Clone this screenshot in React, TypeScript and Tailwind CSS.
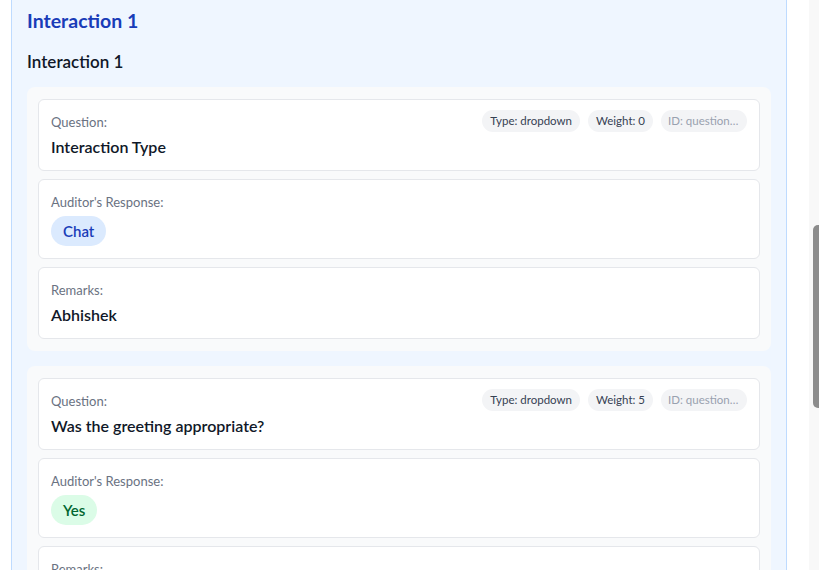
const questions = [
  {
    question: "Interaction Type",
    type: "dropdown",
    weight: 0,
    id: "question_interaction_type",
    response: "Chat",
    tone: "blue",
    remarks: "Abhishek",
  },
  {
    question: "Was the greeting appropriate?",
    type: "dropdown",
    weight: 5,
    id: "question_greeting",
    response: "Yes",
    tone: "green",
    remarks: "Greeted the customer by name",
  },
];

const Chip = ({ children, muted }: { children: React.ReactNode; muted?: boolean }) => (
  <span
    className={`block h-[22px] truncate rounded-full bg-gray-100 text-[11.5px] leading-[22px] ${
      muted ? "max-w-[86px] px-[7px] text-gray-400" : "px-2 text-gray-700"
    }`}
  >
    {children}
  </span>
);

const App = () => {
  return (
    <div className="flex h-[570px] overflow-hidden bg-white font-['Lato',sans-serif]">
      <div className="flex-1 pl-[11px] pr-[22px]">
        {/* Interaction panel */}
        <section className="border-x border-blue-200 bg-blue-50 px-[15px] pt-[7px]">
          <h2 className="text-[19.5px] font-bold leading-7 text-blue-800">Interaction 1</h2>
          <h3 className="mt-[15px] text-[17px] font-semibold leading-6 text-gray-900">Interaction 1</h3>

          <div className="mt-[13px] space-y-[15px]">
            {questions.map((q) => (
              <div key={q.id} className="space-y-2 rounded-lg bg-gray-50 px-[11px] py-3">
                {/* Question */}
                <div className="flex items-start justify-between rounded-md border border-gray-200 bg-white p-3">
                  <div>
                    <p className="text-[13px] leading-5 text-gray-500">Question:</p>
                    <p className="mt-1 text-[16px] font-semibold leading-[22px] text-gray-900">{q.question}</p>
                  </div>
                  <div className="-mt-[2px] flex gap-2">
                    <Chip>Type: {q.type}</Chip>
                    <Chip>Weight: {q.weight}</Chip>
                    <Chip muted>ID: {q.id}</Chip>
                  </div>
                </div>

                {/* Response */}
                <div className="rounded-md border border-gray-200 bg-white p-3">
                  <p className="text-[13px] leading-5 text-gray-500">Auditor's Response:</p>
                  <span
                    className={`mt-1 inline-block rounded-full px-3 py-1 text-[15px] font-semibold leading-[22px] ${
                      q.tone === "blue" ? "bg-blue-100 text-blue-800" : "bg-green-100 text-green-800"
                    }`}
                  >
                    {q.response}
                  </span>
                </div>

                {/* Remarks */}
                <div className="rounded-md border border-gray-200 bg-white p-3">
                  <p className="text-[13px] leading-5 text-gray-500">Remarks:</p>
                  <p className="mt-1 text-[16px] font-semibold leading-[22px] text-gray-900">{q.remarks}</p>
                </div>
              </div>
            ))}
          </div>
        </section>
      </div>

      {/* Scrollbar */}
      <div className="w-[10px] bg-[#f8f8f8] pl-[4px] pt-[225px]">
        <div className="h-[183px] w-[10px] rounded-md bg-[#8c8c8c]" />
      </div>
    </div>
  );
};

export default App;
